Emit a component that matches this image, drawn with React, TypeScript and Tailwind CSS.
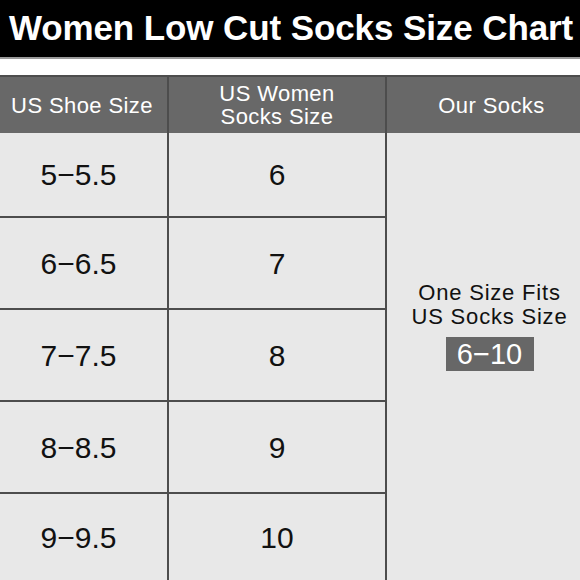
const rows = [
  { shoe: "5−5.5", sock: "6", h: "h-[83px]" },
  { shoe: "6−6.5", sock: "7", h: "h-[92px]" },
  { shoe: "7−7.5", sock: "8", h: "h-[92px]" },
  { shoe: "8−8.5", sock: "9", h: "h-[92px]" },
  { shoe: "9−9.5", sock: "10", h: "h-[88px]" },
];

export default function App() {
  return (
    <div className="h-[580px] w-[580px] overflow-hidden bg-white font-['Liberation_Sans',Arial,sans-serif]">
      <div className="flex h-[57px] items-center justify-center bg-black pl-[2px]">
        <h1 className="whitespace-nowrap text-[35px] font-bold tracking-[-0.1px] text-white">
          Women Low Cut Socks Size Chart
        </h1>
      </div>
      <div className="h-[2px] bg-[#9a9a9a]" />
      <div className="h-[16px] bg-white" />

      <div className="grid grid-cols-[169px_218px_193px] border-t-2 border-[#4d4d4d] bg-[#686868] text-[22px] tracking-[0.4px] text-white">
        <div className="flex h-[56px] items-center justify-center border-r-2 border-[#4d4d4d] pr-[3px]">
          US Shoe Size
        </div>
        <div className="flex h-[56px] flex-col items-center justify-center border-r-2 border-[#4d4d4d] leading-[23px]">
          <span>US Women</span>
          <span>Socks Size</span>
        </div>
        <div className="flex h-[56px] items-center justify-center pl-[16px]">
          Our Socks
        </div>
      </div>

      <div className="grid grid-cols-[169px_218px_193px] bg-[#e8e8e8] text-[#111]">
        <div className="col-span-2 flex flex-col">
          {rows.map((r, i) => (
            <div
              key={r.shoe}
              className={`grid grid-cols-[169px_218px] ${r.h} ${i > 0 ? "border-t-2 border-[#4d4d4d]" : ""}`}
            >
              <div className="flex items-center justify-center border-r-2 border-[#4d4d4d] pr-[10px] text-[30px]">
                {r.shoe}
              </div>
              <div className="flex items-center justify-center border-r-2 border-[#4d4d4d] text-[30px]">
                {r.sock}
              </div>
            </div>
          ))}
        </div>
        <div className="flex flex-col items-center pl-[12px] pt-[148px] text-[22px] leading-[24px] tracking-[0.8px]">
          <span>One Size Fits</span>
          <span>US Socks Size</span>
          <span className="mt-[8px] flex h-[34px] w-[88px] items-center justify-center bg-[#676767] text-[29px] tracking-normal text-white">
            6−10
          </span>
        </div>
      </div>
    </div>
  );
}
